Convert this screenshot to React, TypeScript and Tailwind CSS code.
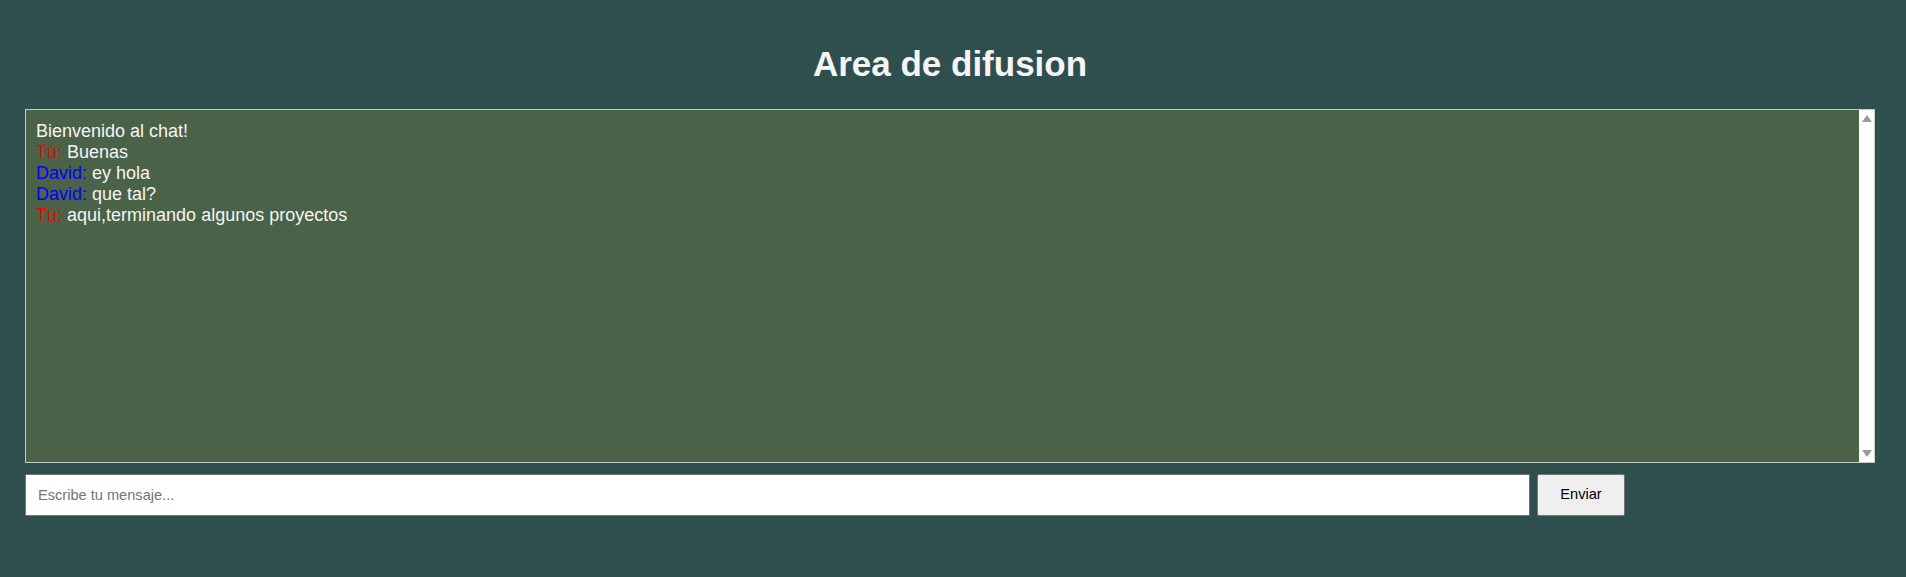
import { useState } from "react";

type Msg = { from?: "Tú" | "David"; text: string };

const messages: Msg[] = [
  { text: "Bienvenido al chat!" },
  { from: "Tú", text: "Buenas" },
  { from: "David", text: "ey hola" },
  { from: "David", text: "que tal?" },
  { from: "Tú", text: "aqui,terminando algunos proyectos" },
];

export default function App() {
  const [draft, setDraft] = useState("");

  return (
    <main
      className="min-h-[577px] bg-[#2f4f4f] text-[#f5f5f5]"
      style={{ fontFamily: '"Liberation Sans", Arial, sans-serif' }}
    >
      <div className="ml-[25px] w-[1850px] pt-[44px]">
        <h1 className="text-center text-[35px] font-bold leading-[40px] mb-[25px]">
          Area de difusion
        </h1>

        {/* Chat log */}
        <div className="flex h-[354px] border border-[#c9c9c9] bg-[#4a6248]">
          <div className="flex-1 px-[10px] pt-[11px] pb-[10px] text-[18px] leading-[normal]">
            {messages.map((m, i) => (
              <div key={i}>
                {m.from && (
                  <span className={m.from === "Tú" ? "text-[#ff0000]" : "text-[#0000ff]"}>
                    {m.from}:{" "}
                  </span>
                )}
                {m.text}
              </div>
            ))}
          </div>
          <div className="flex w-[15px] flex-col items-center justify-between bg-white pt-[5px] pb-[5px]">
            <div className="h-0 w-0 border-x-[5px] border-b-[7px] border-x-transparent border-b-[#9a9a9a]" />
            <div className="h-0 w-0 border-x-[5px] border-t-[7px] border-x-transparent border-t-[#9a9a9a]" />
          </div>
        </div>

        {/* Composer */}
        <div className="mt-[11px] flex gap-[7px]">
          <input
            type="text"
            value={draft}
            onChange={(e) => setDraft(e.target.value)}
            placeholder="Escribe tu mensaje..."
            className="h-[42px] w-[1505px] border border-[#767676] bg-white px-[12px] text-[14.6px] text-black outline-none placeholder:text-[#757575]"
          />
          <button className="h-[42px] w-[88px] rounded-[2px] border border-[#767676] bg-[#efefef] text-[14.6px] text-black">
            Enviar
          </button>
        </div>
      </div>
    </main>
  );
}
